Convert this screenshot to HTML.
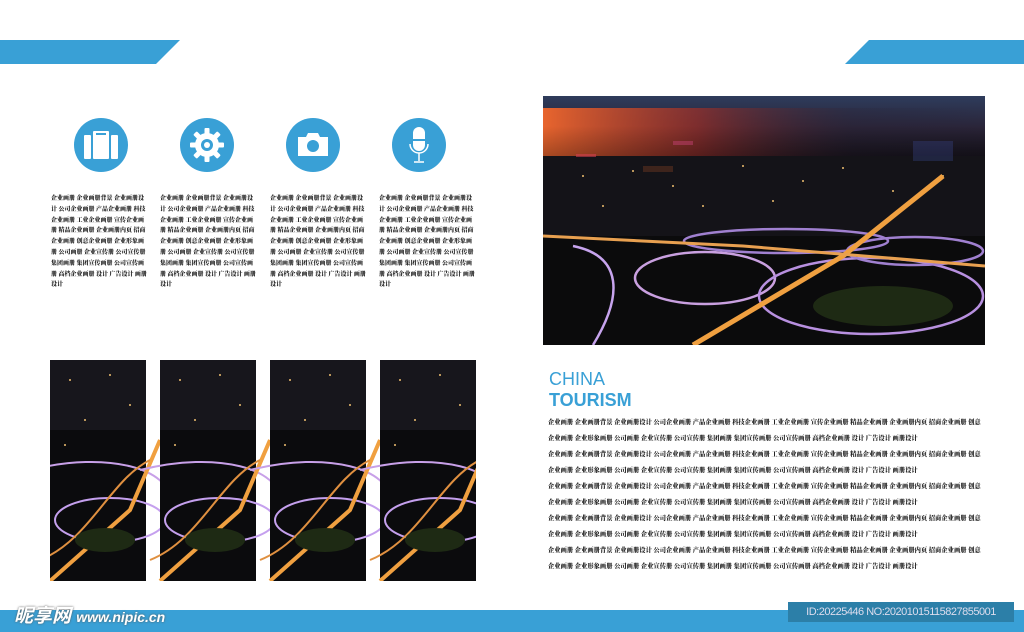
<!DOCTYPE html>
<html><head><meta charset="utf-8"><style>
*{margin:0;padding:0;box-sizing:border-box}
body{width:1024px;height:632px;background:#fff;position:relative;overflow:hidden;font-family:"Liberation Serif","Noto Serif CJK SC",serif}
.abs{position:absolute}
.ic{position:absolute;top:118px;width:54px;height:54px;border-radius:50%;background:#39a0d6}
.t{position:absolute;top:193px;width:97px;font-family:"Noto Serif CJK SC",serif;font-size:6px;line-height:10.8px;font-weight:900;color:#222;word-break:break-all}
.r{position:absolute;left:548px;width:440px;font-family:"Noto Serif CJK SC",serif;font-size:6.3px;line-height:16px;font-weight:900;color:#222;white-space:nowrap;overflow:hidden}
</style></head><body>
<div class="abs" style="left:0;top:40px;width:180px;height:24px;background:#39a0d6;clip-path:polygon(0 0,100% 0,156px 100%,0 100%)"></div>
<div class="abs" style="left:845px;top:40px;width:179px;height:24px;background:#39a0d6;clip-path:polygon(24px 0,100% 0,100% 100%,0 100%)"></div>

<div class="ic" style="left:74px"><svg width="54" height="54"><rect x="10" y="17" width="7" height="24" rx="1" fill="#fff"/><rect x="19" y="13" width="16" height="28" rx="1" fill="#fff"/><rect x="22" y="15" width="10" height="2" fill="#39a0d6"/><rect x="37" y="17" width="7" height="24" rx="1" fill="#fff"/></svg></div>
<div class="ic" style="left:180px"><svg width="54" height="54"><g fill="#fff" transform="translate(27 27)"><circle r="12"/><g id="th"><rect x="-2.5" y="-17" width="5" height="7" rx="1"/></g><use href="#th" transform="rotate(45)"/><use href="#th" transform="rotate(90)"/><use href="#th" transform="rotate(135)"/><use href="#th" transform="rotate(180)"/><use href="#th" transform="rotate(225)"/><use href="#th" transform="rotate(270)"/><use href="#th" transform="rotate(315)"/></g><circle cx="27" cy="27" r="6" fill="#39a0d6"/><circle cx="27" cy="27" r="3" fill="#fff"/></svg></div>
<div class="ic" style="left:286px"><svg width="54" height="54"><path d="M12 19h8l2-4h10l2 4h8v19H12z" fill="#fff"/><circle cx="27" cy="28" r="6" fill="#39a0d6"/></svg></div>
<div class="ic" style="left:392px"><svg width="54" height="54"><rect x="21" y="9" width="12" height="24" rx="6" fill="#fff"/><rect x="21" y="21" width="12" height="2" fill="#39a0d6"/><path d="M18 26a9 9 0 0 0 18 0" stroke="#fff" stroke-width="1.5" fill="none"/><path d="M27 35v8M22 44h10" stroke="#fff" stroke-width="1.5"/></svg></div>

<div class="t" style="left:51px;width:96px">企业画册 企业画册背景 企业画册设计 公司企业画册 产品企业画册 科技企业画册 工业企业画册 宣传企业画册 精品企业画册 企业画册内页 招商企业画册 创意企业画册 企业形象画册 公司画册 企业宣传册 公司宣传册 集团画册 集团宣传画册 公司宣传画册 高档企业画册 设计 广告设计 画册设计</div>
<div class="t" style="left:160px">企业画册 企业画册背景 企业画册设计 公司企业画册 产品企业画册 科技企业画册 工业企业画册 宣传企业画册 精品企业画册 企业画册内页 招商企业画册 创意企业画册 企业形象画册 公司画册 企业宣传册 公司宣传册 集团画册 集团宣传画册 公司宣传画册 高档企业画册 设计 广告设计 画册设计</div>
<div class="t" style="left:270px">企业画册 企业画册背景 企业画册设计 公司企业画册 产品企业画册 科技企业画册 工业企业画册 宣传企业画册 精品企业画册 企业画册内页 招商企业画册 创意企业画册 企业形象画册 公司画册 企业宣传册 公司宣传册 集团画册 集团宣传画册 公司宣传画册 高档企业画册 设计 广告设计 画册设计</div>
<div class="t" style="left:379px">企业画册 企业画册背景 企业画册设计 公司企业画册 产品企业画册 科技企业画册 工业企业画册 宣传企业画册 精品企业画册 企业画册内页 招商企业画册 创意企业画册 企业形象画册 公司画册 企业宣传册 公司宣传册 集团画册 集团宣传画册 公司宣传画册 高档企业画册 设计 广告设计 画册设计</div>

<svg class="abs" style="left:543px;top:96px" width="442" height="249">
<defs><linearGradient id="sky" x1="0" y1="0" x2="0" y2="1"><stop offset="0" stop-color="#2e3c5c"/><stop offset=".5" stop-color="#2a2438"/><stop offset="1" stop-color="#17131c"/></linearGradient>
<linearGradient id="glow" x1="0" y1="0" x2="1" y2="0"><stop offset="0" stop-color="#e8652e"/><stop offset=".35" stop-color="#a03028" stop-opacity=".7"/><stop offset=".7" stop-color="#2a2030" stop-opacity=".2"/><stop offset="1" stop-color="#1a1c30" stop-opacity="0"/></linearGradient>
<linearGradient id="hz" x1="0" y1="0" x2="0" y2="1"><stop offset="0" stop-color="#000" stop-opacity="0"/><stop offset="1" stop-color="#000" stop-opacity=".3"/></linearGradient></defs>
<rect width="442" height="249" fill="#0b0b0c"/>
<rect width="442" height="64" fill="url(#sky)"/>
<rect y="12" width="442" height="52" fill="url(#glow)"/>
<rect y="30" width="442" height="34" fill="url(#hz)"/>
<rect y="60" width="442" height="80" fill="#141318"/>
<g fill="#f0c070"><circle cx="40" cy="80" r="1"/><circle cx="90" cy="75" r="1"/><circle cx="130" cy="90" r="1"/><circle cx="200" cy="70" r="1"/><circle cx="260" cy="85" r="1"/><circle cx="300" cy="72" r="1"/><circle cx="350" cy="95" r="1"/><circle cx="400" cy="80" r="1"/><circle cx="160" cy="110" r="1"/><circle cx="230" cy="105" r="1"/><circle cx="60" cy="110" r="1"/></g>
<rect x="100" y="70" width="30" height="6" fill="#5a3020" opacity=".6"/><rect x="33" y="58" width="20" height="3" fill="#d04050" opacity=".6"/><rect x="130" y="45" width="20" height="4" fill="#c04070" opacity=".5"/><rect x="370" y="45" width="40" height="20" fill="#4050a0" opacity=".3"/>
<g fill="none" stroke-width="2.5">
<ellipse cx="162" cy="182" rx="70" ry="26" stroke="#c9a0e0"/>
<ellipse cx="328" cy="200" rx="112" ry="38" stroke="#b890e0"/>
<ellipse cx="243" cy="145" rx="102" ry="12" stroke="#a080d0"/>
<ellipse cx="372" cy="155" rx="68" ry="14" stroke="#a080d0"/>
<path d="M30 150 C80 160 80 200 50 249" stroke="#c7a4ee"/>
<path d="M150 249 L300 160 L400 80" stroke="#f0a040" stroke-width="5"/>
<path d="M0 140 L200 150 L442 170" stroke="#e8a050" stroke-width="3"/>
</g>
<ellipse cx="340" cy="210" rx="70" ry="20" fill="#1e2a14"/>
</svg>

<svg class="abs" style="left:50px;top:360px" width="426" height="221">
<defs><g id="sc"><rect width="96" height="221" fill="#0b0b0d"/><rect width="96" height="70" fill="#17161c"/>
<g fill="#f0c070"><circle cx="20" cy="20" r="1"/><circle cx="60" cy="15" r="1"/><circle cx="80" cy="45" r="1"/><circle cx="35" cy="60" r="1"/><circle cx="15" cy="85" r="1"/></g>
<g fill="none"><path d="M-20 110 C60 90 120 110 120 140" stroke="#c8a0e8" stroke-width="2"/><ellipse cx="60" cy="160" rx="55" ry="22" stroke="#c5a0ee" stroke-width="2"/><path d="M0 221 L80 150 L110 80" stroke="#f0a040" stroke-width="4"/><path d="M-10 200 C40 180 60 120 100 100" stroke="#e09040" stroke-width="2"/></g>
<ellipse cx="55" cy="180" rx="30" ry="12" fill="#1e2a14"/></g></defs>
<use href="#sc"/><use href="#sc" x="110"/><use href="#sc" x="220"/><use href="#sc" x="330"/>
</svg>

<div class="abs" style="left:549px;top:369px;font-family:'Liberation Sans',sans-serif;font-size:18px;color:#39a0d6;line-height:20px">CHINA</div>
<div class="abs" style="left:549px;top:389px;font-family:'Liberation Sans',sans-serif;font-size:18px;font-weight:bold;color:#39a0d6;line-height:22px">TOURISM</div>
<div class="r" style="top:414px">企业画册 企业画册背景 企业画册设计 公司企业画册 产品企业画册 科技企业画册 工业企业画册 宣传企业画册 精品企业画册 企业画册内页 招商企业画册 创意<br>企业画册 企业形象画册 公司画册 企业宣传册 公司宣传册 集团画册 集团宣传画册 公司宣传画册 高档企业画册 设计 广告设计 画册设计<br>企业画册 企业画册背景 企业画册设计 公司企业画册 产品企业画册 科技企业画册 工业企业画册 宣传企业画册 精品企业画册 企业画册内页 招商企业画册 创意<br>企业画册 企业形象画册 公司画册 企业宣传册 公司宣传册 集团画册 集团宣传画册 公司宣传画册 高档企业画册 设计 广告设计 画册设计<br>企业画册 企业画册背景 企业画册设计 公司企业画册 产品企业画册 科技企业画册 工业企业画册 宣传企业画册 精品企业画册 企业画册内页 招商企业画册 创意<br>企业画册 企业形象画册 公司画册 企业宣传册 公司宣传册 集团画册 集团宣传画册 公司宣传画册 高档企业画册 设计 广告设计 画册设计<br>企业画册 企业画册背景 企业画册设计 公司企业画册 产品企业画册 科技企业画册 工业企业画册 宣传企业画册 精品企业画册 企业画册内页 招商企业画册 创意<br>企业画册 企业形象画册 公司画册 企业宣传册 公司宣传册 集团画册 集团宣传画册 公司宣传画册 高档企业画册 设计 广告设计 画册设计<br>企业画册 企业画册背景 企业画册设计 公司企业画册 产品企业画册 科技企业画册 工业企业画册 宣传企业画册 精品企业画册 企业画册内页 招商企业画册 创意<br>企业画册 企业形象画册 公司画册 企业宣传册 公司宣传册 集团画册 集团宣传画册 公司宣传画册 高档企业画册 设计 广告设计 画册设计</div>

<div class="abs" style="left:0;top:610px;width:1024px;height:22px;background:#39a0d6"></div>
<div class="abs" style="left:14px;top:601px;font-family:'Liberation Sans','Noto Sans CJK SC',sans-serif;font-size:19px;font-weight:bold;font-style:italic;color:#fff;text-shadow:0 0 2px #555">昵享网 <span style="font-size:14px">www.nipic.cn</span></div>
<div class="abs" style="left:788px;top:602px;width:226px;height:20px;background:#2c7fa8;color:#dde;font-family:'Liberation Sans',sans-serif;font-size:11px;line-height:20px;text-align:center;letter-spacing:-.5px">ID:20225446 NO:20201015115827855001</div>
</body></html>
